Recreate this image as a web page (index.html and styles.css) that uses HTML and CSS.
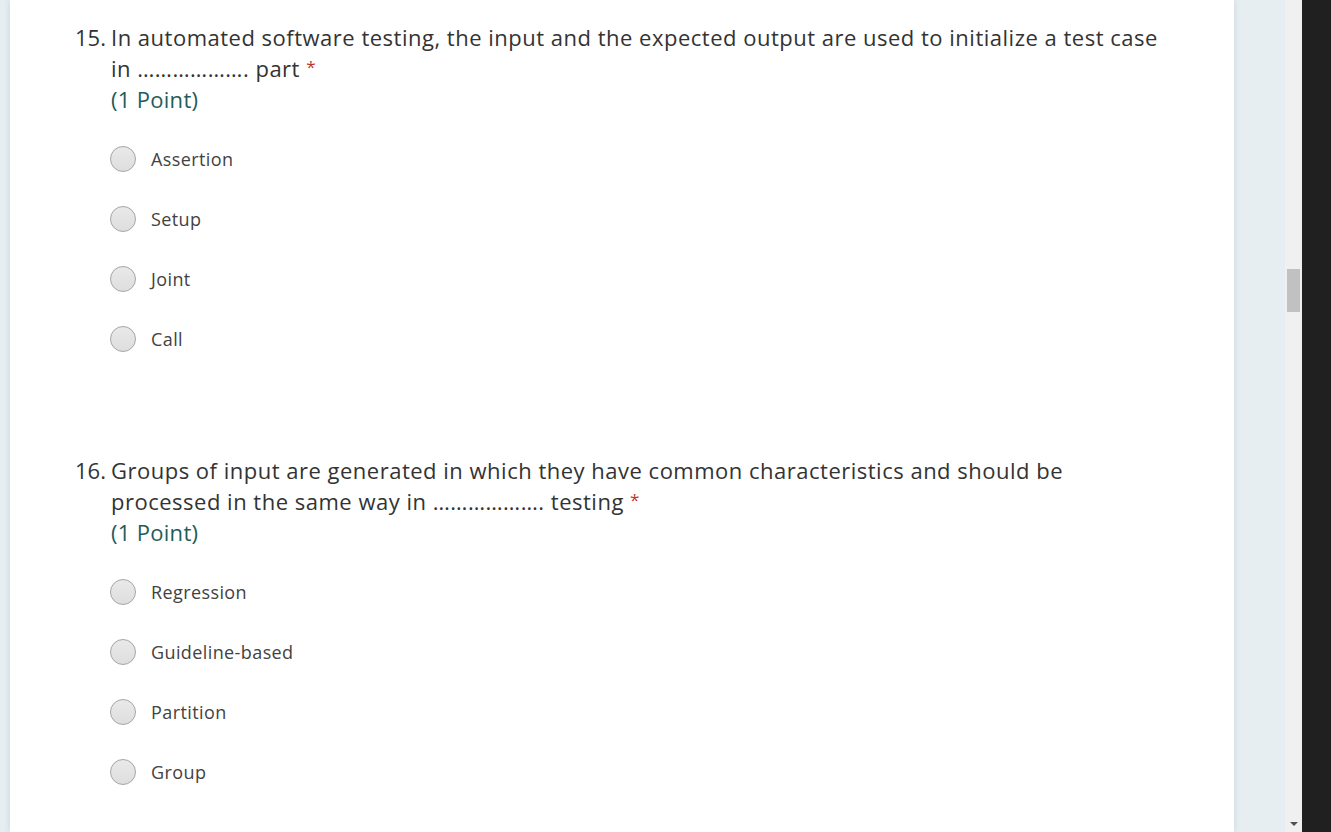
FILE: index.html
```html
<!DOCTYPE html>
<html lang="en">
<head>
    <meta charset="UTF-8">
    <meta name="viewport" content="width=device-width, initial-scale=1.0">
    <title>Quiz</title>
    <link rel="stylesheet" href="styles.css">
</head>
<body>

    <div class="page">
        <!-- Form card -->
        <div class="card">

            <!-- Question 15 -->
            <div class="question">
                <div class="title">
                    <span class="number">15.</span>
                    <div class="text">
                        In automated software testing, the input and the expected output are used to initialize a test case in ………………. part <span class="required">*</span>
                        <div class="points">(1 Point)</div>
                    </div>
                </div>
                <div class="options">
                    <label class="option"><span class="radio"></span>Assertion</label>
                    <label class="option"><span class="radio"></span>Setup</label>
                    <label class="option"><span class="radio"></span>Joint</label>
                    <label class="option"><span class="radio"></span>Call</label>
                </div>
            </div>

            <!-- Question 16 -->
            <div class="question">
                <div class="title">
                    <span class="number">16.</span>
                    <div class="text">
                        Groups of input are generated in which they have common characteristics and should be processed in the same way in ………………. testing <span class="required">*</span>
                        <div class="points">(1 Point)</div>
                    </div>
                </div>
                <div class="options">
                    <label class="option"><span class="radio"></span>Regression</label>
                    <label class="option"><span class="radio"></span>Guideline-based</label>
                    <label class="option"><span class="radio"></span>Partition</label>
                    <label class="option"><span class="radio"></span>Group</label>
                </div>
            </div>

        </div>
    </div>

    <!-- Scrollbar -->
    <div class="scrollbar">
        <div class="thumb"></div>
        <div class="arrow"></div>
    </div>

    <div class="edge"></div>

</body>
</html>
```

FILE: styles.css
```css
/* General body styles */
body {
    margin: 0;
    height: 100vh;
    overflow: hidden;
    display: flex;
    font-family: "Open Sans", "Noto Sans", sans-serif;
    background-color: #e7eef1;
}

/* Page area with the form card */
.page {
    flex: 1;
    padding-left: 10px;
    overflow: hidden;
}

.card {
    width: 1224px;
    height: 100%;
    box-sizing: border-box;
    background: #fff;
    padding: 22px 0 0 65px;
    box-shadow: 0 0 6px rgba(140, 170, 180, 0.35);
}

/* Question block */
.question {
    margin-bottom: 86px;
}

.title {
    display: flex;
    font-size: 22px;
    line-height: 31px;
    letter-spacing: 0.5px;
    color: #333;
}

.number {
    width: 36px;
    flex-shrink: 0;
    letter-spacing: 0;
}

.text {
    width: 1054px;
}

.dots {
    letter-spacing: 0;
}

.required {
    color: #c4341f;
    font-size: 17px;
    line-height: 1;
    vertical-align: 4px;
}

.points {
    color: #1f5c5a;
    letter-spacing: 0.3px;
}

/* Radio options */
.options {
    margin-top: 14px;
    padding-left: 35px;
}

.option {
    display: flex;
    align-items: center;
    height: 60px;
    font-size: 18px;
    letter-spacing: 0.4px;
    color: #424242;
}

.radio {
    width: 24px;
    height: 24px;
    border-radius: 50%;
    border: 1px solid #a5a5a5;
    background: linear-gradient(#e9e9e9, #dedede);
    margin-right: 15px;
    flex-shrink: 0;
}

/* Scrollbar */
.scrollbar {
    width: 17px;
    background: #f0f0f0;
    position: relative;
}

.thumb {
    margin: 269px 2px 0 2px;
    height: 43px;
    background: #c1c1c1;
}

.arrow {
    position: absolute;
    bottom: 6px;
    left: 5px;
    width: 0;
    height: 0;
    border-left: 4px solid transparent;
    border-right: 4px solid transparent;
    border-top: 4px solid #505050;
}

.edge {
    width: 29px;
    background: #202020;
}
```
